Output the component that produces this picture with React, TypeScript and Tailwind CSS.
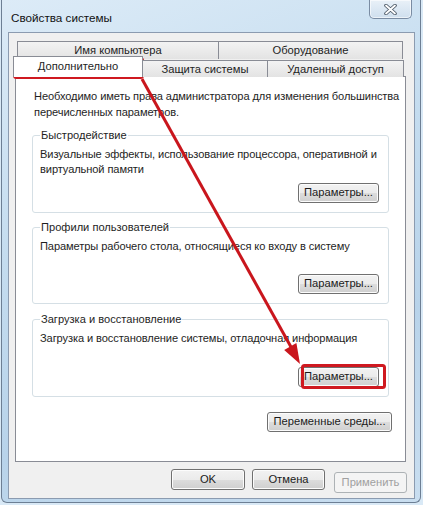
import React from "react";

const font = { fontFamily: '"Liberation Sans", "Noto Sans", sans-serif' };

function WinButton({
  label,
  w,
  h = "h-[21px]",
  disabled = false,
}: {
  label: string;
  w: string;
  h?: string;
  disabled?: boolean;
}) {
  return (
    <button
      className={
        disabled
          ? `${w} ${h} whitespace-nowrap rounded-[3px] border border-[#adb2b5] bg-[#f4f4f4] text-[11.2px] leading-none text-[#a0a0a0]`
          : `${w} ${h} whitespace-nowrap rounded-[3px] border border-[#707070] bg-[linear-gradient(#f2f2f2_0%,#ebebeb_50%,#dddddd_50%,#cfcfcf_100%)] text-[11.2px] leading-none text-[#1a1a1a] shadow-[inset_0_0_0_1px_#fcfcfc]`
      }
    >
      {label}
    </button>
  );
}

function Group({
  title,
  text,
  className,
}: {
  title: string;
  text: React.ReactNode;
  className: string;
}) {
  return (
    <div
      className={`${className} mx-[16px] rounded-[3px] border border-[#d5dfe5] px-[7px] flex flex-col`}
    >
      <span className="-mt-[9px] w-fit px-[1px] bg-white text-[11.1px] leading-[16px] text-[#1e1e1e] whitespace-nowrap">
        {title}
      </span>
      <p className="mt-[4px] text-[11.1px] tracking-[-0.1px] leading-[15px] text-[#1e1e1e] whitespace-nowrap">
        {text}
      </p>
      <div className="mt-auto mb-[9px] flex justify-end pr-[2px]">
        <WinButton label="Параметры..." w="w-[81px]" h="h-[20px]" />
      </div>
    </div>
  );
}

export default function App() {
  return (
    <div
      className="relative w-[423px] h-[505px] overflow-hidden bg-[#d9e9f6]"
      style={font}
    >
      {/* окно */}
      <div className="w-[420px] h-[503px] ml-[1px] rounded-b-[6px] border border-t-0 border-[#6d7f94] bg-[linear-gradient(160deg,#dcebf7_0%,#c4dcef_40%,#b8d3ea_70%,#c9def0_100%)] flex flex-col">
        {/* заголовок */}
        <div className="h-[32px] flex items-start justify-between">
          <span className="mt-[10px] ml-[9px] text-[11.7px] leading-[16px] text-[#111]">
            Свойства системы
          </span>
          <div className="mr-[8px] w-[43px] h-[19px] rounded-b-[5px] border border-t-0 border-[#7a8ca3] bg-[linear-gradient(#e9f1f8,#cfdfee)] shadow-[inset_0_0_0_1px_rgba(255,255,255,0.6)] flex items-center justify-center">
            <svg width="13" height="11" viewBox="0 0 13 11">
              <path
                d="M2 1.5 L11 9.5 M11 1.5 L2 9.5"
                stroke="#4b5866"
                strokeWidth="3.6"
                strokeLinecap="round"
              />
              <path
                d="M2 1.5 L11 9.5 M11 1.5 L2 9.5"
                stroke="#ffffff"
                strokeWidth="1.8"
                strokeLinecap="round"
              />
            </svg>
          </div>
        </div>

        {/* клиентская область */}
        <div className="ml-[6px] w-[407px] h-[467px] border border-[#8b9bb0] bg-[#f0f0f0] pt-[8px] flex flex-col">
          {/* вкладки, ряд 1 */}
          <div className="ml-[8px] flex h-[18px]">
            <div className="w-[202px] h-[18px] border border-b-0 border-[#898c95] bg-[linear-gradient(#f3f3f3,#e3e3e3)] text-[11.2px] leading-[17px] text-center text-[#1e1e1e] whitespace-nowrap">
              Имя компьютера
            </div>
            <div className="w-[184px] h-[18px] border border-b-0 border-l-0 border-[#898c95] bg-[linear-gradient(#f3f3f3,#e3e3e3)] text-[11.2px] leading-[17px] text-center text-[#1e1e1e] whitespace-nowrap">
              Оборудование
            </div>
          </div>
          {/* вкладки, ряд 2 */}
          <div className="relative z-10 ml-[4px] -mb-px flex items-end h-[18px]">
            <div className="w-[130px] h-[21px] -mt-[3px] border border-b-0 border-[#898c95] bg-white text-[11.2px] leading-[18px] text-center text-[#1e1e1e] whitespace-nowrap">
              Дополнительно
            </div>
            <div className="w-[125px] h-[17px] border border-b-0 border-l-0 border-[#898c95] bg-[linear-gradient(#f3f3f3,#e3e3e3)] text-[11.2px] leading-[16px] text-center text-[#1e1e1e] whitespace-nowrap">
              Защита системы
            </div>
            <div className="w-[136px] h-[17px] border border-b-0 border-l-0 border-[#898c95] bg-[linear-gradient(#f3f3f3,#e3e3e3)] text-[11.2px] leading-[16px] text-center text-[#1e1e1e] whitespace-nowrap">
              Удаленный доступ
            </div>
          </div>

          {/* панель */}
          <div className="ml-[6px] w-[391px] h-[386px] border border-[#898c95] bg-white flex flex-col">
            <p className="mt-[11px] ml-[18px] text-[11.1px] tracking-[-0.1px] leading-[16px] text-[#1e1e1e] whitespace-nowrap">
              Необходимо иметь права администратора для изменения большинства
              <br />
              перечисленных параметров.
            </p>
            <Group
              className="mt-[15px] h-[78px]"
              title="Быстродействие"
              text={
                <>
                  Визуальные эффекты, использование процессора, оперативной и
                  <br />
                  виртуальной памяти
                </>
              }
            />
            <Group
              className="mt-[14px] h-[77px]"
              title="Профили пользователей"
              text="Параметры рабочего стола, относящиеся ко входу в систему"
            />
            <Group
              className="mt-[15px] h-[78px]"
              title="Загрузка и восстановление"
              text="Загрузка и восстановление системы, отладочная информация"
            />
            <div className="mt-[15px] mr-[13px] flex justify-end">
              <WinButton label="Переменные среды..." w="w-[125px]" h="h-[20px]" />
            </div>
          </div>

          {/* нижние кнопки */}
          <div className="mt-[7px] mr-[7px] flex justify-end gap-[7px]">
            <WinButton label="OK" w="w-[74px]" />
            <WinButton label="Отмена" w="w-[73px]" />
            <div className="ml-[2px]">
              <WinButton label="Применить" w="w-[73px]" disabled />
            </div>
          </div>
        </div>
      </div>

      {/* красные пометки поверх скриншота */}
      <svg
        className="absolute inset-0 pointer-events-none"
        width="423"
        height="505"
        viewBox="0 0 423 505"
      >
        <rect
          x="14.5"
          y="58.5"
          width="128"
          height="19"
          rx="2"
          fill="none"
          stroke="#cf1920"
          strokeWidth="3"
        />
        <rect
          x="302.5"
          y="365.5"
          width="82"
          height="22"
          rx="2"
          fill="none"
          stroke="#cf1920"
          strokeWidth="3"
        />
        <line
          x1="142"
          y1="79"
          x2="291"
          y2="347"
          stroke="#c9161d"
          strokeWidth="3"
        />
        <polygon points="300,364 284.2,349.9 296.4,343.1" fill="#c9161d" />
      </svg>
    </div>
  );
}
